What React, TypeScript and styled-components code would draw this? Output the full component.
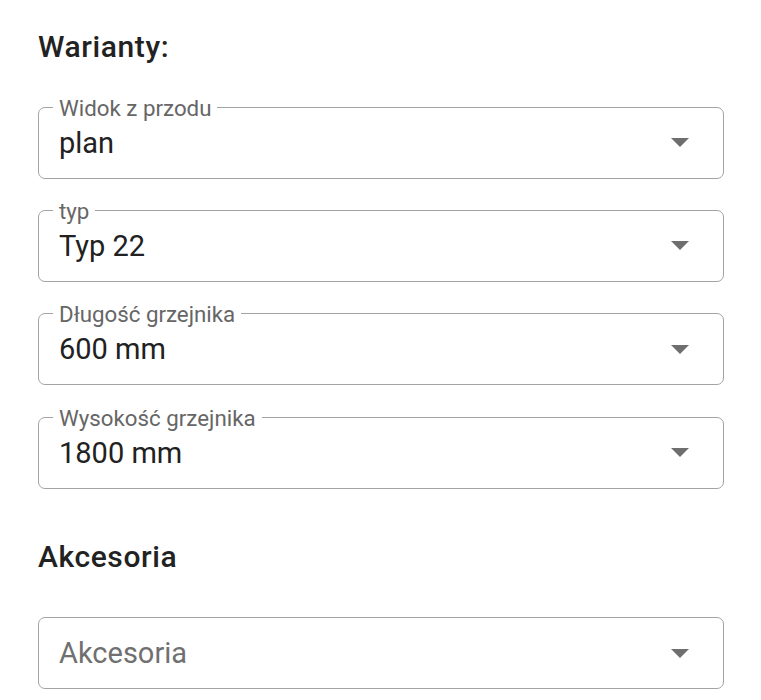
import styled, { createGlobalStyle } from "styled-components";

const GlobalStyle = createGlobalStyle`
    body {
        margin: 0;
        background: #ffffff;
        font-family: Roboto, "Liberation Sans", sans-serif;
    }
`

type Option = { label?: string; value: string; placeholder?: boolean }

const variants: Option[] = [
    { label: 'Widok z przodu', value: 'plan' },
    { label: 'typ', value: 'Typ 22' },
    { label: 'Długość grzejnika', value: '600 mm' },
    { label: 'Wysokość grzejnika', value: '1800 mm' },
]

const SelectField = ({ label, value, placeholder }: Option) => {
    return (
        <Field>
            {label && <Label>{label}</Label>}
            <Value $placeholder={placeholder}>{value}</Value>
            <Arrow viewBox="0 0 18 9">
                <path d="M0 0 L9 9 L18 0 Z" />
            </Arrow>
        </Field>
    )
}

const App = () => {
    return (
        <>
            <GlobalStyle />
            <Page>
                <Heading>Warianty:</Heading>
                <FieldList>
                    {variants.map((v) => (
                        <SelectField key={v.label} {...v} />
                    ))}
                </FieldList>
                <Heading $spaced>Akcesoria</Heading>
                <FieldList $after>
                    <SelectField value="Akcesoria" placeholder />
                </FieldList>
            </Page>
        </>
    )
}

const Page = styled.div`
    width: 686px;
    padding: 29px 0 0 38px;
    display: flex;
    flex-direction: column;
`
const Heading = styled.h2<{ $spaced?: boolean }>`
    margin: ${props => props.$spaced ? '50px' : '0'} 0 0 0;
    font-size: 30px;
    line-height: 36px;
    font-weight: 500;
    color: #222222;
    letter-spacing: 0.6px;
`
const FieldList = styled.div<{ $after?: boolean }>`
    display: flex;
    flex-direction: column;
    gap: 31.4px;
    margin-top: ${props => props.$after ? '42.5px' : '41.5px'};
`
const Field = styled.div`
    position: relative;
    box-sizing: border-box;
    height: 72px;
    display: flex;
    align-items: center;
    justify-content: space-between;
    padding: 0 34px 0 20px;
    border: 1.8px solid #a3a3a3;
    border-radius: 7px;
`
const Label = styled.span`
    position: absolute;
    top: -11px;
    left: 14px;
    padding: 0 6px;
    background: #ffffff;
    font-size: 22.3px;
    line-height: 22px;
    color: #666666;
`
const Value = styled.span<{ $placeholder?: boolean }>`
    font-size: 29px;
    line-height: 34px;
    color: ${props => props.$placeholder ? '#707070' : '#212121'};
`
const Arrow = styled.svg`
    width: 18px;
    height: 9px;
    fill: #6e6e6e;
`

export default App;
